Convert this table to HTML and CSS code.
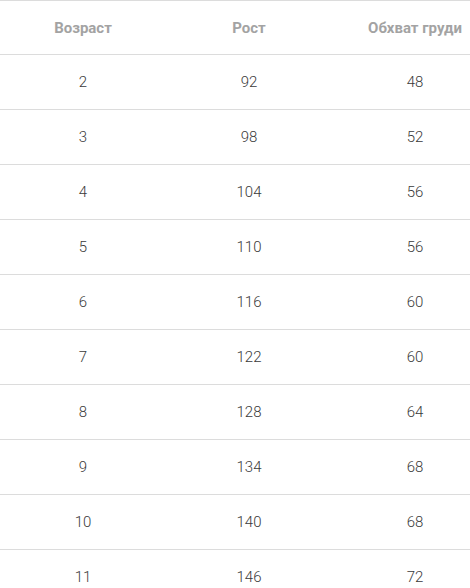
FILE: index.html
```html
<!DOCTYPE html>
<html lang="ru">
<head>
<meta charset="utf-8">
<link rel="stylesheet" href="styles.css">
</head>
<body>
<div class="wrap">
<table class="sizes">
<thead>
<tr><th>Возраст</th><th>Рост</th><th>Обхват груди</th></tr>
</thead>
<tbody>
<tr><td>2</td><td>92</td><td>48</td></tr>
<tr><td>3</td><td>98</td><td>52</td></tr>
<tr><td>4</td><td>104</td><td>56</td></tr>
<tr><td>5</td><td>110</td><td>56</td></tr>
<tr><td>6</td><td>116</td><td>60</td></tr>
<tr><td>7</td><td>122</td><td>60</td></tr>
<tr><td>8</td><td>128</td><td>64</td></tr>
<tr><td>9</td><td>134</td><td>68</td></tr>
<tr><td>10</td><td>140</td><td>68</td></tr>
<tr><td>11</td><td>146</td><td>72</td></tr>
</tbody>
</table>
</div>
</body>
</html>
```

FILE: styles.css
```css
html, body {
  margin: 0;
  padding: 0;
  background: #fff;
  overflow: hidden;
}
.wrap {
  width: 470px;
  height: 588px;
  overflow: hidden;
}
.sizes {
  width: 498px;
  border-collapse: collapse;
  table-layout: fixed;
  font-family: Roboto, "Noto Sans", sans-serif;
  font-size: 15px;
}
.sizes th,
.sizes td {
  width: 166px;
  height: 54px;
  padding: 0;
  text-align: center;
  vertical-align: middle;
  border-top: 1px solid #dcdcdc;
}
.sizes th {
  font-weight: 700;
  color: #a3a3a3;
  height: 53px;
}
.sizes td {
  font-weight: 300;
  color: #3a3a3a;
}
```
